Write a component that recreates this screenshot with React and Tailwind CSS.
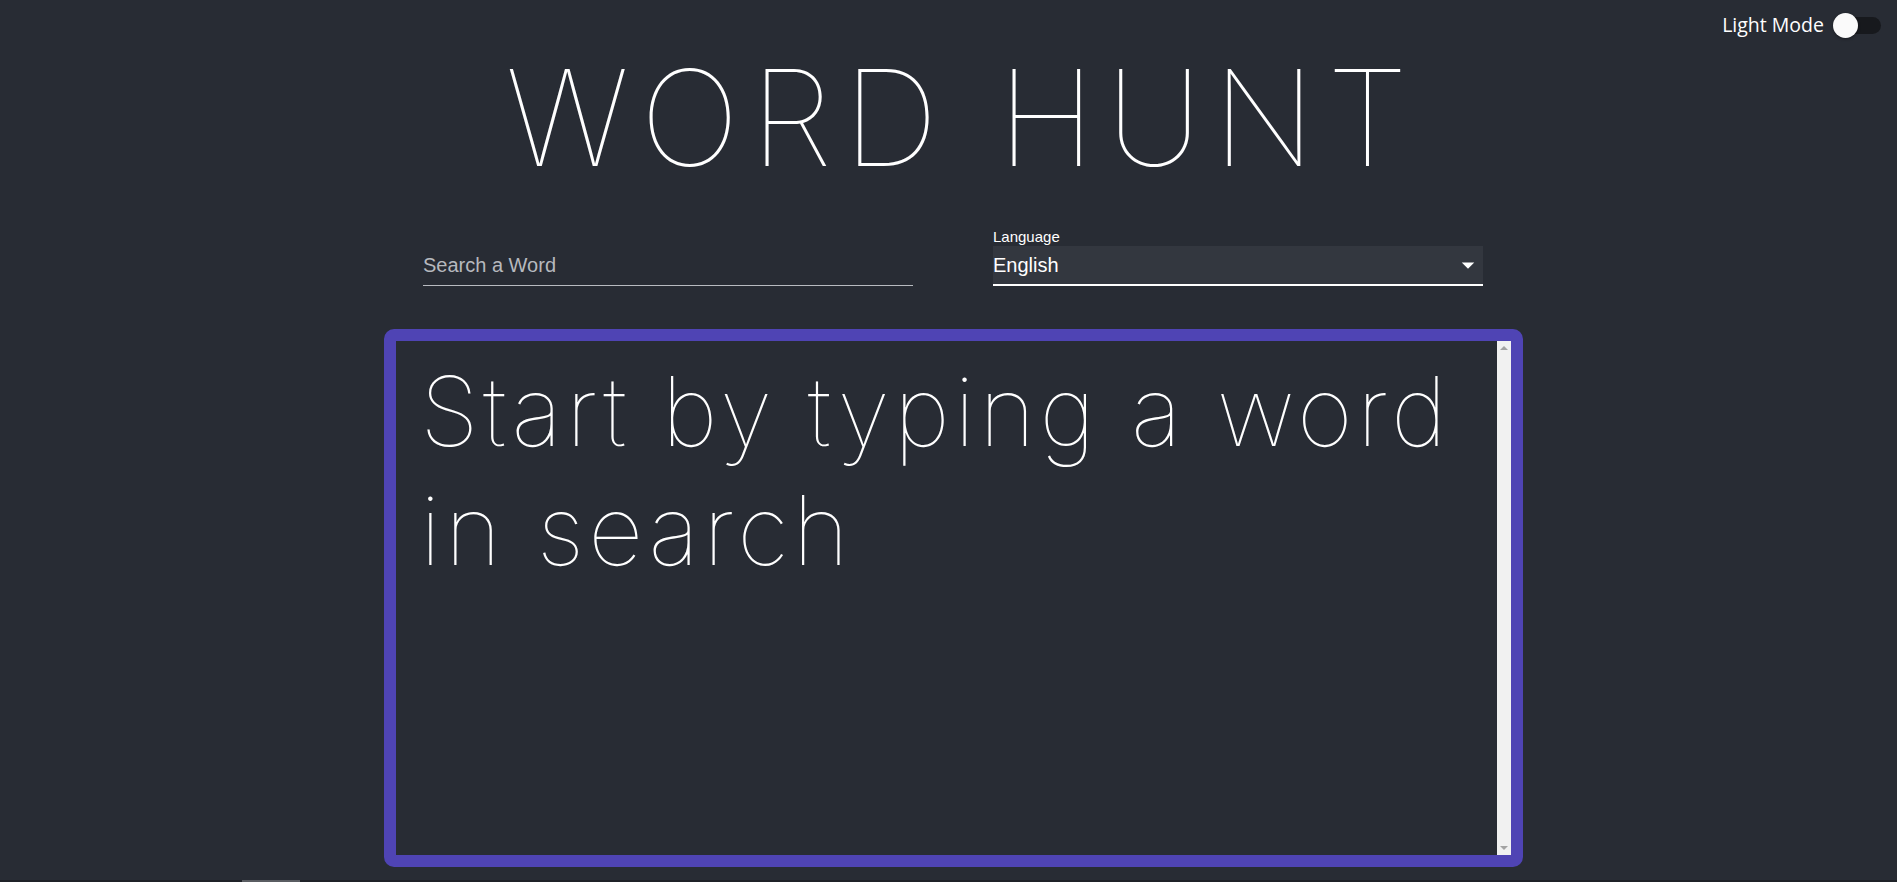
import { useState } from 'react'

function ModeSwitch({ on, onToggle }) {
  return (
    <button onClick={onToggle} className="relative flex h-[25px] w-[48px] items-center">
      <span className="h-[17px] w-full rounded-full bg-[#17191d]" />
      <span className="absolute left-0 top-0 h-[25px] w-[25px] rounded-full bg-[#fafafa] shadow-[0_1px_3px_rgba(0,0,0,0.4)]" />
    </button>
  )
}

export default function App() {
  const [word, setWord] = useState('')
  const [lang, setLang] = useState('English')
  const [light, setLight] = useState(false)

  return (
    <div className="flex h-[882px] w-full flex-col overflow-hidden bg-[#282c34] text-white">
      <header className="flex h-[50px] items-center justify-end gap-[9px] pr-[16px]">
        <span className="text-[19.5px] text-white" style={{ fontFamily: '"Open Sans", sans-serif' }}>
          Light Mode
        </span>
        <ModeSwitch on={light} onToggle={() => setLight(!light)} />
      </header>

      <div className="flex flex-1 justify-center pl-[10px]">
        <div className="flex w-[1139px] flex-col">
          <h1
            className="mt-[1px] pl-[18px] text-center text-[133px] font-thin leading-none tracking-[11px] text-white"
            style={{ fontFamily: 'Inter, sans-serif' }}
          >
            WORD HUNT
          </h1>

          <div
            className="mt-[43px] flex gap-[80px] px-[39px]"
            style={{ fontFamily: '"Liberation Sans", Arial, sans-serif' }}
          >
            <div className="flex w-[490px] flex-col">
              <div className="h-[19px]" />
              <input
                value={word}
                onChange={(e) => setWord(e.target.value)}
                placeholder="Search a Word"
                className="h-[40px] w-full border-b border-[#b8bbc0] bg-transparent text-[20px] text-white outline-none placeholder:text-[#b6b9be]"
              />
            </div>
            <div className="flex w-[490px] flex-col">
              <label className="h-[19px] text-[15px] leading-[19px] text-white">Language</label>
              <div className="flex h-[40px] items-center justify-between border-b-2 border-white bg-[#33373f]">
                <span className="text-[20px] text-white">{lang}</span>
                <svg viewBox="0 0 24 24" className="h-[30px] w-[30px] fill-white">
                  <path d="M7 10l5 5 5-5z" />
                </svg>
              </div>
            </div>
          </div>

          <div className="mt-[43px] flex h-[538px] rounded-[10px] border-[12px] border-[#4f44b4]">
            <div className="flex-1 pl-[24px] pt-[11px]">
              <p
                className="text-[96px] font-thin leading-[119px] tracking-[4.3px] text-white"
                style={{ fontFamily: 'Inter, sans-serif' }}
              >
                Start by typing a word in search
              </p>
            </div>
            <div className="flex w-[14px] flex-col items-center justify-between bg-[#f1f1f1] py-[5px]">
              <svg viewBox="0 0 8 4" className="h-[4px] w-[8px] fill-[#a3a3a3]">
                <path d="M0 4L4 0L8 4z" />
              </svg>
              <svg viewBox="0 0 8 4" className="h-[4px] w-[8px] fill-[#a3a3a3]">
                <path d="M0 0L8 0L4 4z" />
              </svg>
            </div>
          </div>
        </div>
      </div>

      <div className="flex h-[2px] bg-[#1f2228]">
        <div className="ml-[242px] w-[58px] bg-[#5a5d62]" />
      </div>
    </div>
  )
}
